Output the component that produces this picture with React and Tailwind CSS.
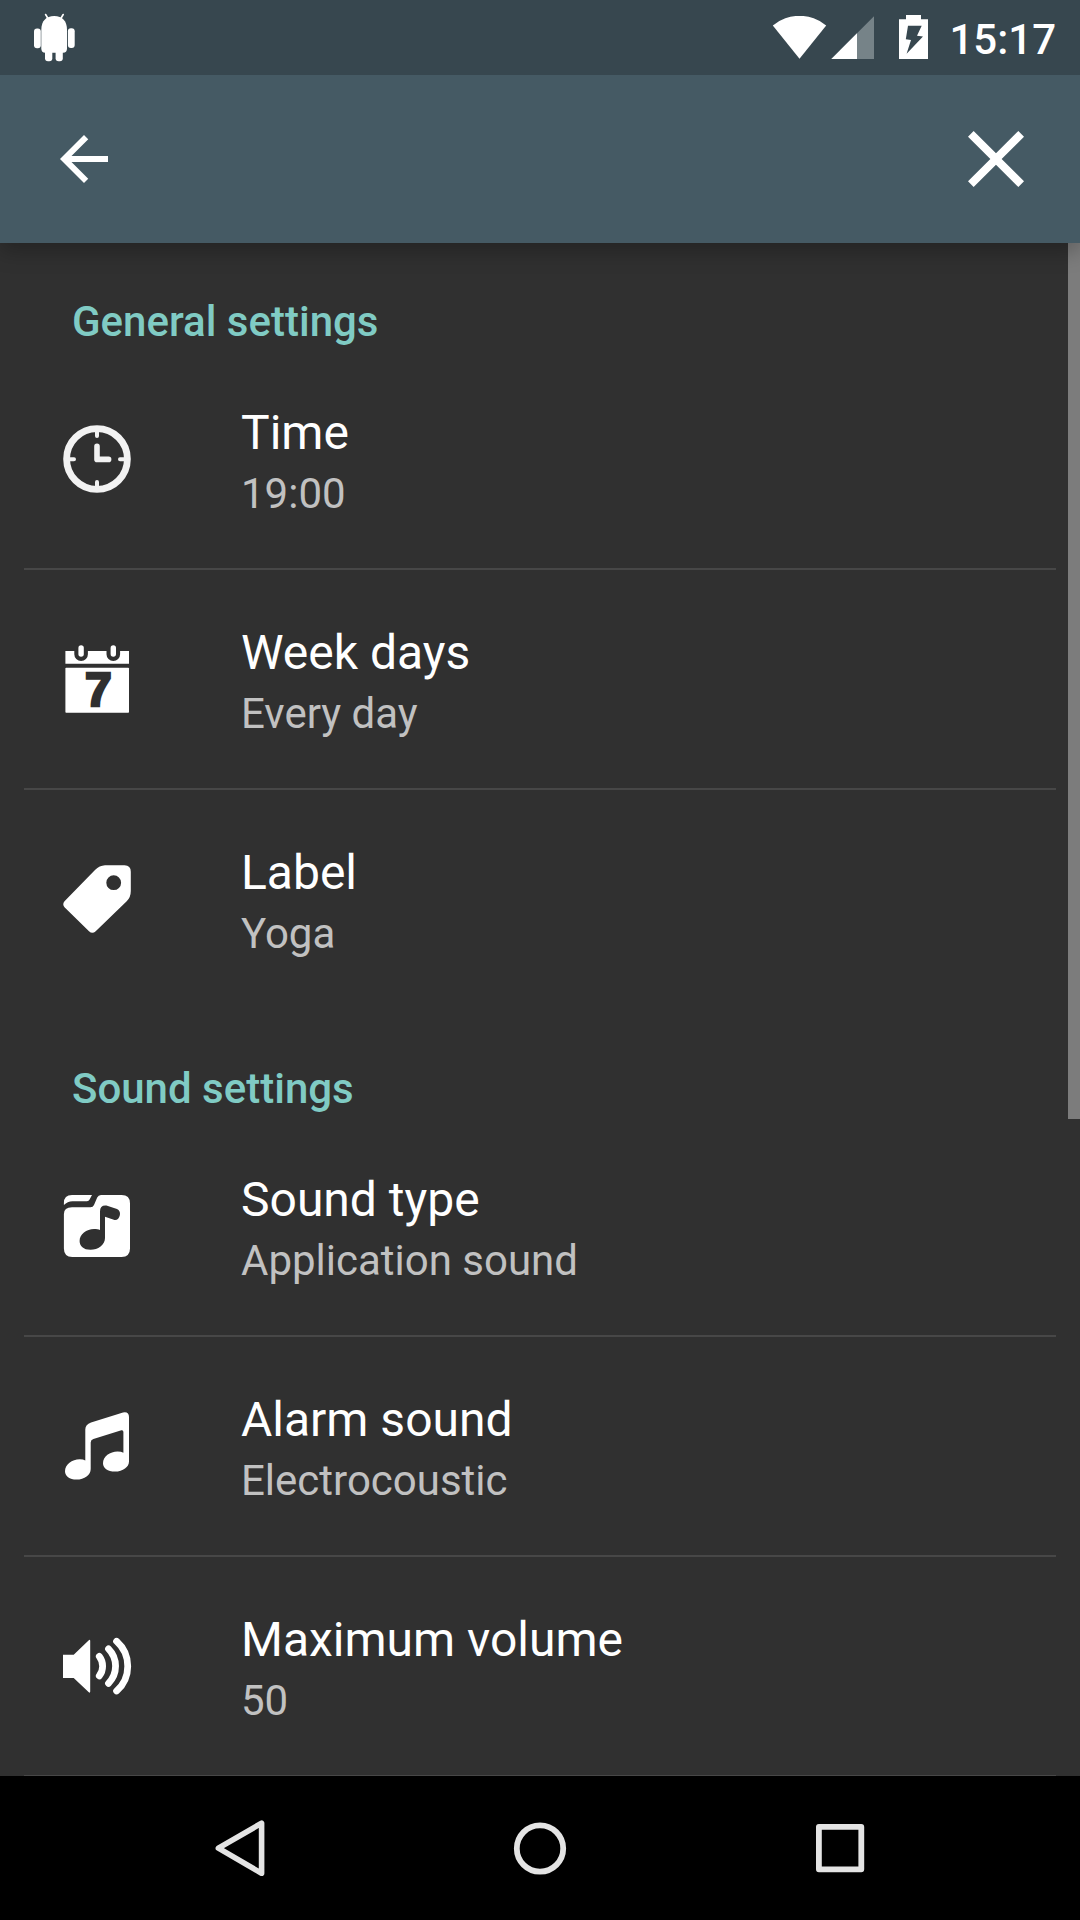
function AndroidIcon() {
    return (
        <svg className="w-11 h-[50px]" viewBox="0 0 44 50" fill="#fff">
            <path d="M9.3 18C9.3 9 14 4 22.2 4S35 9 35 18V36.5Q35 40.7 31 40.7H13.3Q9.3 40.7 9.3 36.5Z" />
            <rect x="2" y="16.5" width="6.8" height="19.8" rx="3" />
            <rect x="35.9" y="16.3" width="6.8" height="19.8" rx="3" />
            <rect x="13" y="34" width="7.3" height="15.2" rx="3" />
            <rect x="23.6" y="34" width="7.2" height="15.2" rx="3" />
            <path d="M13.7 2.6 15.9 6.4M31.1 2.6 28.9 6.4" stroke="#fff" strokeWidth="1.8" strokeLinecap="round" />
        </svg>
    );
}

function ClockIcon() {
    return (
        <svg className="size-[68px]" viewBox="0 0 68 68" fill="none" stroke="#f2f2f2" strokeLinecap="round" strokeLinejoin="round">
            <circle cx="34" cy="34" r="30.4" strokeWidth="6.8" />
            <path d="M34 5V11M34 57V63M5 34.2H11M57 34.2H63" strokeWidth="4" />
            <path d="M34 21.4V34.4H45.6" strokeWidth="5.6" />
        </svg>
    );
}

function CalendarIcon() {
    return (
        <svg className="size-[68px] overflow-visible" viewBox="0 0 68 68" fill="#fff">
            <path d="M3 6H11.3V9.2A6.8 6.8 0 0 0 24.9 9.2V6H43.5V9.2A6.8 6.8 0 0 0 57.1 9.2V6H66V18.7H2.4V6Z" />
            <rect x="15.4" y="0.3" width="5.4" height="11.5" rx="2.7" />
            <rect x="47.6" y="0.3" width="5.4" height="11.5" rx="2.7" />
            <rect x="2.4" y="22.8" width="63.6" height="45" rx="0.8" />
            <text
                x="35.4"
                y="61.4"
                textAnchor="middle"
                className="font-['Liberation_Sans'] font-bold text-[48px]"
                fill="#303030"
                stroke="#303030"
                strokeWidth="2.6"
            >
                7
            </text>
        </svg>
    );
}

function TagIcon() {
    return (
        <svg className="size-[68px]" viewBox="0 0 68 68" fill="#fff">
            <path
                fillRule="evenodd"
                d="M42 .3H61.5Q67.8 .3 67.8 6.8V26Q67.8 32.3 63.7 36.3L32.7 66.2Q29.3 69.2 26 66.2L1.5 42.3Q-1 39.3 1.5 36.2L32 5Q36.5 .6 42 .3ZM50.7 10.3A7.4 7.4 0 1 0 50.7 25.1A7.4 7.4 0 1 0 50.7 10.3Z"
            />
        </svg>
    );
}

function MusicFolderIcon() {
    return (
        <svg className="size-[68px]" viewBox="0 0 68 68" fill="#fff">
            <path d="M.9 13V11Q.9 3 9 3H29L26.6 7.6Q25.8 9.2 24 9.2H9.5Q4.5 9.2 .9 13Z" />
            <path d="M.9 22Q.9 15.2 9 15.2H27.5Q30 15.2 31 13L34.2 5.5Q35.3 3 38 3H58.6Q67 3 67 11.4V56.6Q67 65 58.6 65H9.3Q.9 65 .9 56.6Z" />
            <path
                fill="#303030"
                d="M37 19.5Q37 13 43.4 13.6L54 17Q57.6 18.8 56.9 23Q55.7 28.4 51.6 28L42 24.7V46C42 53 35 57.8 27.5 57.8C20.5 57.8 16.6 54 16.6 49C16.6 42.5 23.5 37.1 31 37.1C33.5 37.1 35.5 37.4 37 38.1Z"
            />
        </svg>
    );
}

function MusicIcon() {
    return (
        <svg className="size-[68px]" viewBox="0 0 68 68" fill="#fff">
            <path
                d="M22.3 17.5Q22.3 12.4 28 10.4L60 .5Q66 -.6 66 5V49.5C66 55 60 59.6 52 59.6C44.5 59.6 40 56 40 51.2C40 44.5 47 39.5 54.5 39.5Q58.3 39.5 60.4 40.7V20Q60.4 17.8 58.4 18.2L30.4 26.9Q27.7 27.8 27.7 30.6V57C27.7 63 21.5 67.6 13.5 67.6C6.5 67.6 2 64 2 59.2C2 52.4 9 47.3 16.7 47.3Q20.3 47.3 22.3 48.4Z"
            />
        </svg>
    );
}

function VolumeIcon() {
    return (
        <svg className="size-[68px] overflow-visible" viewBox="0 0 68 68" fill="none" stroke="#fff" strokeWidth="6.8" strokeLinecap="round">
            <path d="M0 22.7H10.7L25.8 8.2Q27.2 7.2 27.2 9V59.6Q27.2 61.4 25.8 60.3L10.7 46H0Z" fill="#fff" stroke="none" />
            <path d="M36.3 24.4A16 16 0 0 1 36.3 43.9" />
            <path d="M45.5 16.8A24.6 24.6 0 0 1 45.5 51.3" />
            <path d="M53.6 9.3A33.3 33.3 0 0 1 53.6 59" />
        </svg>
    );
}

const sections = [
    {
        title: 'General settings',
        items: [
            { title: 'Time', value: '19:00', Icon: ClockIcon },
            { title: 'Week days', value: 'Every day', Icon: CalendarIcon },
            { title: 'Label', value: 'Yoga', Icon: TagIcon },
        ],
    },
    {
        title: 'Sound settings',
        items: [
            { title: 'Sound type', value: 'Application sound', Icon: MusicFolderIcon },
            { title: 'Alarm sound', value: 'Electrocoustic', Icon: MusicIcon },
            { title: 'Maximum volume', value: '50', Icon: VolumeIcon, divider: true },
        ],
    },
];

function StatusBar() {
    return (
        <div className="relative z-20 flex shrink-0 items-start h-[75px] bg-[#37474f] pl-8 pr-6 text-white">
            <div className="mt-3">
                <AndroidIcon />
            </div>
            <svg className="ml-auto mt-4 w-[55px] h-11" viewBox="0 0 55 44" fill="#fff">
                <path d="M.8 9.4A42 42 0 0 1 54.2 9.4L27.5 42.8Z" />
            </svg>
            <svg className="ml-1 mt-[15px] w-11 h-11" viewBox="0 0 44 44">
                <path d="M.3 44 43 1.3V44Z" fill="#768388" />
                <path d="M.3 44 26 18.3V44Z" fill="#fff" />
            </svg>
            <svg className="ml-6 mt-[15px] w-[29px] h-11" viewBox="0 0 29 44">
                <path d="M7 0H22V4.3H29V44H0V4.3H7Z" fill="#fff" />
                <path d="M9 10.7H22.7L18 20.7 24 21.5 7.6 38.8 12 25 6.8 24.3Z" fill="#37474f" />
            </svg>
            <span className="ml-[21px] mt-[15px] text-[42px] leading-[49px] font-medium">15:17</span>
        </div>
    );
}

function AppBar() {
    return (
        <div className="relative z-10 flex shrink-0 items-center justify-between h-[168px] bg-[#455a64] pl-12 pr-9 shadow-[0_8px_20px_rgba(0,0,0,0.26)]">
            <button>
                <svg className="size-[72px]" viewBox="0 0 24 24" fill="#fff">
                    <path d="M20 11H7.83l5.59-5.59L12 4l-8 8 8 8 1.41-1.41L7.83 13H20v-2z" />
                </svg>
            </button>
            <button>
                <svg className="size-24" viewBox="0 0 24 24" fill="#fff">
                    <path d="M19 6.41L17.59 5 12 10.59 6.41 5 5 6.41 10.59 12 5 17.59 6.41 19 12 13.41 17.59 19 19 17.59 13.41 12z" />
                </svg>
            </button>
        </div>
    );
}

function SettingRow({ item, divider }) {
    const { title, value, Icon } = item;
    return (
        <div className={`flex items-start h-[220px] mx-6 pl-[39px] border-b-2 ${divider ? 'border-[#474747]' : 'border-transparent'}`}>
            <div className="mt-[75px] w-[178px]">
                <Icon />
            </div>
            <div className="mt-[55px]">
                <p className="text-[48px] leading-14 text-white">{title}</p>
                <p className="mt-2 text-[42px] leading-[49px] text-[#c1c1c1]">{value}</p>
            </div>
        </div>
    );
}

function NavBar() {
    return (
        <div className="flex shrink-0 items-center h-36 bg-black px-[90px]">
            <button className="flex flex-1 justify-center">
                <svg className="size-15" viewBox="0 0 60 60" fill="none" stroke="#e4e4e4" strokeWidth="5.6" strokeLinejoin="round">
                    <path d="M8.4 30.2 51.6 5.2V55.3Z" />
                </svg>
            </button>
            <button className="flex flex-1 justify-center">
                <svg className="size-15" viewBox="0 0 60 60" fill="none" stroke="#e4e4e4" strokeWidth="5.8">
                    <circle cx="30" cy="30.5" r="23.2" />
                </svg>
            </button>
            <button className="flex flex-1 justify-center">
                <svg className="size-15" viewBox="0 0 60 60" fill="none" stroke="#e4e4e4" strokeWidth="5.8" strokeLinejoin="round">
                    <rect x="8.9" y="8.9" width="42.4" height="42.4" />
                </svg>
            </button>
        </div>
    );
}

export default function App() {
    return (
        <div className="flex flex-col w-[1080px] h-[1920px] overflow-hidden bg-[#303030] font-[Roboto,sans-serif]">
            <StatusBar />
            <AppBar />
            <div className="relative flex-1 min-h-0 overflow-hidden">
                {sections.map((section) => (
                    <section key={section.title}>
                        <h2 className="h-[107px] pt-[54px] pl-[72px] text-[42px] leading-[49px] font-medium text-[#80cbc4]">
                            {section.title}
                        </h2>
                        {section.items.map((item, i) => (
                            <SettingRow
                                key={item.title}
                                item={item}
                                divider={item.divider || i < section.items.length - 1}
                            />
                        ))}
                    </section>
                ))}
                {/* scroll thumb */}
                <div className="absolute top-0 right-0 w-3 h-[876px] bg-[#7c7c7c]" />
            </div>
            <NavBar />
        </div>
    );
}
